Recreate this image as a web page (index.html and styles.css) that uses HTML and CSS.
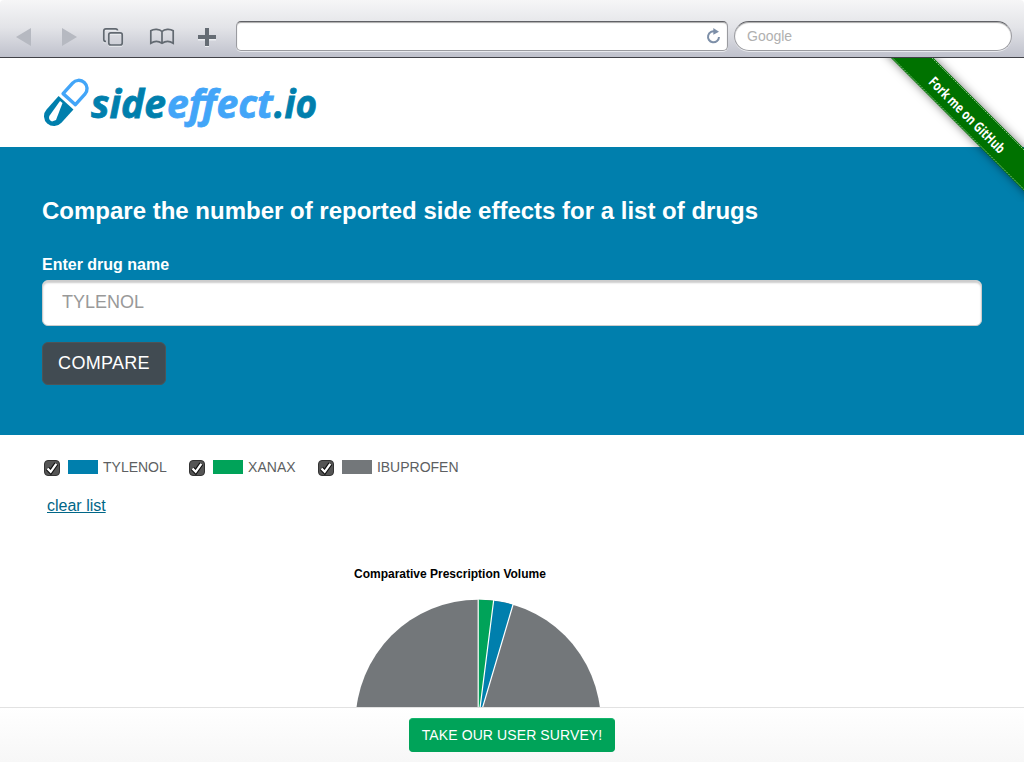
FILE: index.html
```html
<!DOCTYPE html>
<html lang="en">
<head>
<meta charset="utf-8">
<title>sideeffect.io</title>
<link rel="stylesheet" href="styles.css">
</head>
<body>
<div class="browser">
  <div class="toolbar">
    <svg class="tools" width="236" height="57" viewBox="0 0 236 57">
      <path class="nav-arrow" d="M16 37L31 28V46ZM77 37L62 28V46Z"/>
      <g class="tool-shadow" transform="translate(0 1)">
        <path d="M106 41.500Q103.800 41.500 103.800 39.500V31Q103.800 28.800 106 28.800H115.500Q117.500 28.800 117.500 30.500"/>
        <rect x="108.800" y="32.800" width="13.400" height="12.200" rx="2"/>
      </g>
      <g class="tool-line">
        <path d="M106 41.500Q103.800 41.500 103.800 39.500V31Q103.800 28.800 106 28.800H115.500Q117.500 28.800 117.500 30.500"/>
        <rect x="108.800" y="32.800" width="13.400" height="12.200" rx="2"/>
        <path d="M162 43.200C158.500 40.800 154 41 150.800 43.200V30.800C154 28.500 159.500 29 162 31.500C164.500 29 170 28.500 173.200 30.800V43.200C170 41 165.500 40.800 162 43.200ZM162 31.500V43"/>
      </g>
      <path class="plus-shadow" d="M198 38.500H216M207 29V47"/>
      <path class="plus" d="M198 37H216M207 28V46"/>
    </svg>
    <div class="address">
      <svg width="16" height="18" viewBox="0 0 16 18">
        <path class="reload" d="M10.500 4.700A5.500 5.500 0 1 0 14 10"/>
        <path class="reload-head" d="M8.300 1L14 4.800L8.300 7.800Z"/>
      </svg>
    </div>
    <div class="search">Google</div>
  </div>

  <main class="page">
    <header class="header">
      <svg class="logo" width="290" height="60" viewBox="0 0 290 60">
        <g transform="translate(24.700 31) rotate(42)">
          <path class="pill-top" d="M-8.300 -3.800V-18A8.300 8.300 0 0 1 8.300 -18V-3.800Z"/>
          <path class="pill-base" d="M-10 1H10V19A10 10 0 0 1 -10 19Z"/>
        </g>
        <path class="pill-shine" d="M18 30L20.500 32L14 49L10 50.500Q6 48.500 7.300 45Z"/>
        <text class="word dark" x="49" y="47" textLength="75" lengthAdjust="spacingAndGlyphs">side</text>
        <text class="word light" x="125" y="47" textLength="106" lengthAdjust="spacingAndGlyphs">effect</text>
        <text class="word dark" x="232" y="47" textLength="43" lengthAdjust="spacingAndGlyphs">.io</text>
      </svg>
    </header>

    <section class="compare">
      <h1 class="title">Compare the number of reported side effects for a list of drugs</h1>
      <label class="label" for="drug">Enter drug name</label>
      <input class="field" id="drug" type="text" placeholder="TYLENOL">
      <button class="submit" type="button">COMPARE</button>
    </section>

    <section class="results">
      <ul class="legend">
        <li class="drug"><svg class="check" width="16" height="16" viewBox="0 0 16 16"><rect class="check-box" x=".5" y=".5" width="15" height="15" rx="3.500"/><path class="check-edge" d="M3.500 8.500L6.700 11.800L12.300 3.800"/><path class="check-mark" d="M3.500 8.500L6.700 11.800L12.300 3.800"/></svg><span class="swatch blue"></span>TYLENOL</li>
        <li class="drug"><svg class="check" width="16" height="16" viewBox="0 0 16 16"><rect class="check-box" x=".5" y=".5" width="15" height="15" rx="3.500"/><path class="check-edge" d="M3.500 8.500L6.700 11.800L12.300 3.800"/><path class="check-mark" d="M3.500 8.500L6.700 11.800L12.300 3.800"/></svg><span class="swatch green"></span>XANAX</li>
        <li class="drug"><svg class="check" width="16" height="16" viewBox="0 0 16 16"><rect class="check-box" x=".5" y=".5" width="15" height="15" rx="3.500"/><path class="check-edge" d="M3.500 8.500L6.700 11.800L12.300 3.800"/><path class="check-mark" d="M3.500 8.500L6.700 11.800L12.300 3.800"/></svg><span class="swatch gray"></span>IBUPROFEN</li>
      </ul>
      <a class="clear" href="#">clear list</a>
      <figure class="chart">
        <figcaption class="chart-title">Comparative Prescription Volume</figcaption>
        <svg class="pie" width="248" height="110" viewBox="354 597 248 110">
          <circle class="slice-gray" cx="478.200" cy="722.300" r="122.600"/>
          <path class="slice-blue" d="M478.200 722.300L493.700 600.700A122.600 122.600 0 0 1 513 604.700Z"/>
          <path class="slice-green" d="M478.200 722.300V599.700A122.600 122.600 0 0 1 493.700 600.700Z"/>
          <path class="slice-edge" d="M478.200 722.300V599.200M478.200 722.300L493.700 600M478.200 722.300L513.200 604"/>
        </svg>
      </figure>
    </section>

    <svg class="ribbon" width="144" height="145" viewBox="880 57 144 145">
      <path class="ribbon-band" d="M870 37L1044 211V168.500L912.500 37Z"/>
      <path class="ribbon-stitch" d="M872.500 38L1044 209.500M912.500 38.500L1044 170"/>
      <text class="ribbon-text" transform="translate(963.500 118.500) rotate(45)" textLength="101" lengthAdjust="spacingAndGlyphs">Fork me on GitHub</text>
    </svg>
  </main>

  <footer class="survey-bar"><a class="survey" href="#">TAKE OUR USER SURVEY!</a></footer>
</div>
</body>
</html>
```
FILE: styles.css
```css
* { box-sizing: border-box; }
body { margin: 0; font-family: "Liberation Sans", Arial, sans-serif; background: #fff; }
svg { display: block; }
.browser { display: flex; flex-direction: column; width: 1024px; height: 762px; overflow: hidden; }

.toolbar { display: flex; height: 58px; flex: none; border-bottom: 1px solid #414147; border-radius: 4px 4px 0 0; background: linear-gradient(#f6f6f7, #e3e4e8 48%, #bfc1cc); }
.nav-arrow { fill: #b6b9c1; }
.tool-line { fill: none; stroke: #626971; stroke-width: 1.7; }
.tool-shadow { fill: none; stroke: #eceef1; stroke-width: 1.7; }
.plus { stroke: #656c74; stroke-width: 4; }
.plus-shadow { stroke: #eceef1; stroke-width: 4; }
.address { display: flex; justify-content: flex-end; align-items: center; width: 492px; height: 30px; margin-top: 21px; padding-right: 6px; border: 1px solid #9a9ba0; border-top-color: #606166; border-radius: 5px; background: #fff; box-shadow: inset 0 1px 1px #aaa, 0 1px 0 #e9eaee; }
.reload { fill: none; stroke: #7d8fa8; stroke-width: 2; }
.reload-head { fill: #7d8fa8; }
.search { width: 278px; height: 30px; margin: 21px 0 0 6px; padding-left: 12px; border: 1px solid #9a9ba0; border-top-color: #606166; border-radius: 15px; background: #fff; box-shadow: inset 0 1px 1px #aaa, 0 1px 0 #e9eaee; color: #b0b0b0; font-size: 14px; line-height: 29px; }

.page { position: relative; flex: 1; min-height: 0; overflow: hidden; }
.header { height: 89px; padding: 13px 0 0 42px; }
.pill-top { fill: none; stroke: #42a5f8; stroke-width: 3.4; stroke-linejoin: round; }
.pill-base { fill: #007fad; }
.pill-shine { fill: #fff; }
.word { font: italic 700 39px "Open Sans", sans-serif; stroke-width: .8; }
.dark { fill: #007fad; stroke: #007fad; }
.light { fill: #42a5f8; stroke: #42a5f8; }

.compare { display: flex; flex-direction: column; align-items: flex-start; height: 288px; padding: 48px 42px 0; background: #007fad; color: #fff; }
.title { margin: 0; font-size: 24px; line-height: 32px; font-weight: 700; white-space: nowrap; }
.label { margin-top: 28px; font-size: 16px; line-height: 20px; font-weight: 700; }
.field { width: 100%; height: 46px; margin-top: 5px; padding: 0 19px 1px; border: 1px solid #ccc; border-radius: 6px; background: #fff; box-shadow: inset 0 2px 2px #ccc; font: 18px "Liberation Sans", sans-serif; }
.field::placeholder { color: #999; opacity: 1; }
.submit { width: 124px; height: 43px; margin-top: 16px; padding: 0; border: 1px solid #4d5457; border-radius: 6px; background: #414b52; color: #fff; font: 18px "Liberation Sans", sans-serif; letter-spacing: .3px; }

.results { padding: 22px 42px 0; }
.legend { display: flex; gap: 22.300px; margin: 0; padding: 0 0 0 2px; list-style: none; }
.drug { display: flex; align-items: center; height: 19px; color: #5d5f62; font-size: 14px; }
.check { margin-top: 2px; }
.check-box { fill: #555; stroke: #333; }
.check-edge { fill: none; stroke: #111; stroke-width: 4.5; }
.check-mark { fill: none; stroke: #fff; stroke-width: 2.3; }
.swatch { width: 30px; height: 14px; margin: 0 5px 0 8px; }
.blue { background: #007fad; }
.green { background: #00a359; }
.gray { background: #73777a; }
.clear { display: block; width: max-content; margin: 20px 0 0 5px; color: #006687; font-size: 16px; line-height: 20px; }
.chart { margin: 50px 0 0 312px; }
.chart-title { font-size: 12px; line-height: 16px; font-weight: 700; color: #000; }
.pie { margin-top: 15px; }
.slice-gray { fill: #73777a; }
.slice-blue { fill: #007fad; }
.slice-green { fill: #00a359; }
.slice-edge { fill: none; stroke: #fff; stroke-width: 1.2; }

.ribbon { position: absolute; top: -1px; right: 0; }
.ribbon-band { fill: #007200; filter: drop-shadow(0 0 5px rgba(0, 0, 0, .5)); }
.ribbon-stitch { fill: none; stroke: #86c286; stroke-width: 1; stroke-dasharray: 2 1; }
.ribbon-text { fill: #fff; font: 700 14px "Open Sans", sans-serif; text-anchor: middle; }

.survey-bar { display: flex; justify-content: center; flex: none; height: 55px; padding-top: 10px; border-top: 1px solid #e2e2e2; background: linear-gradient(#fff, #f7f7f7); }
.survey { display: block; width: 206px; height: 34px; border: 1px solid #00a359; border-top-color: #12b56b; border-radius: 4px; background: #00a359; color: #fff; font-size: 14px; line-height: 33px; letter-spacing: .1px; text-align: center; text-decoration: none; }
```
